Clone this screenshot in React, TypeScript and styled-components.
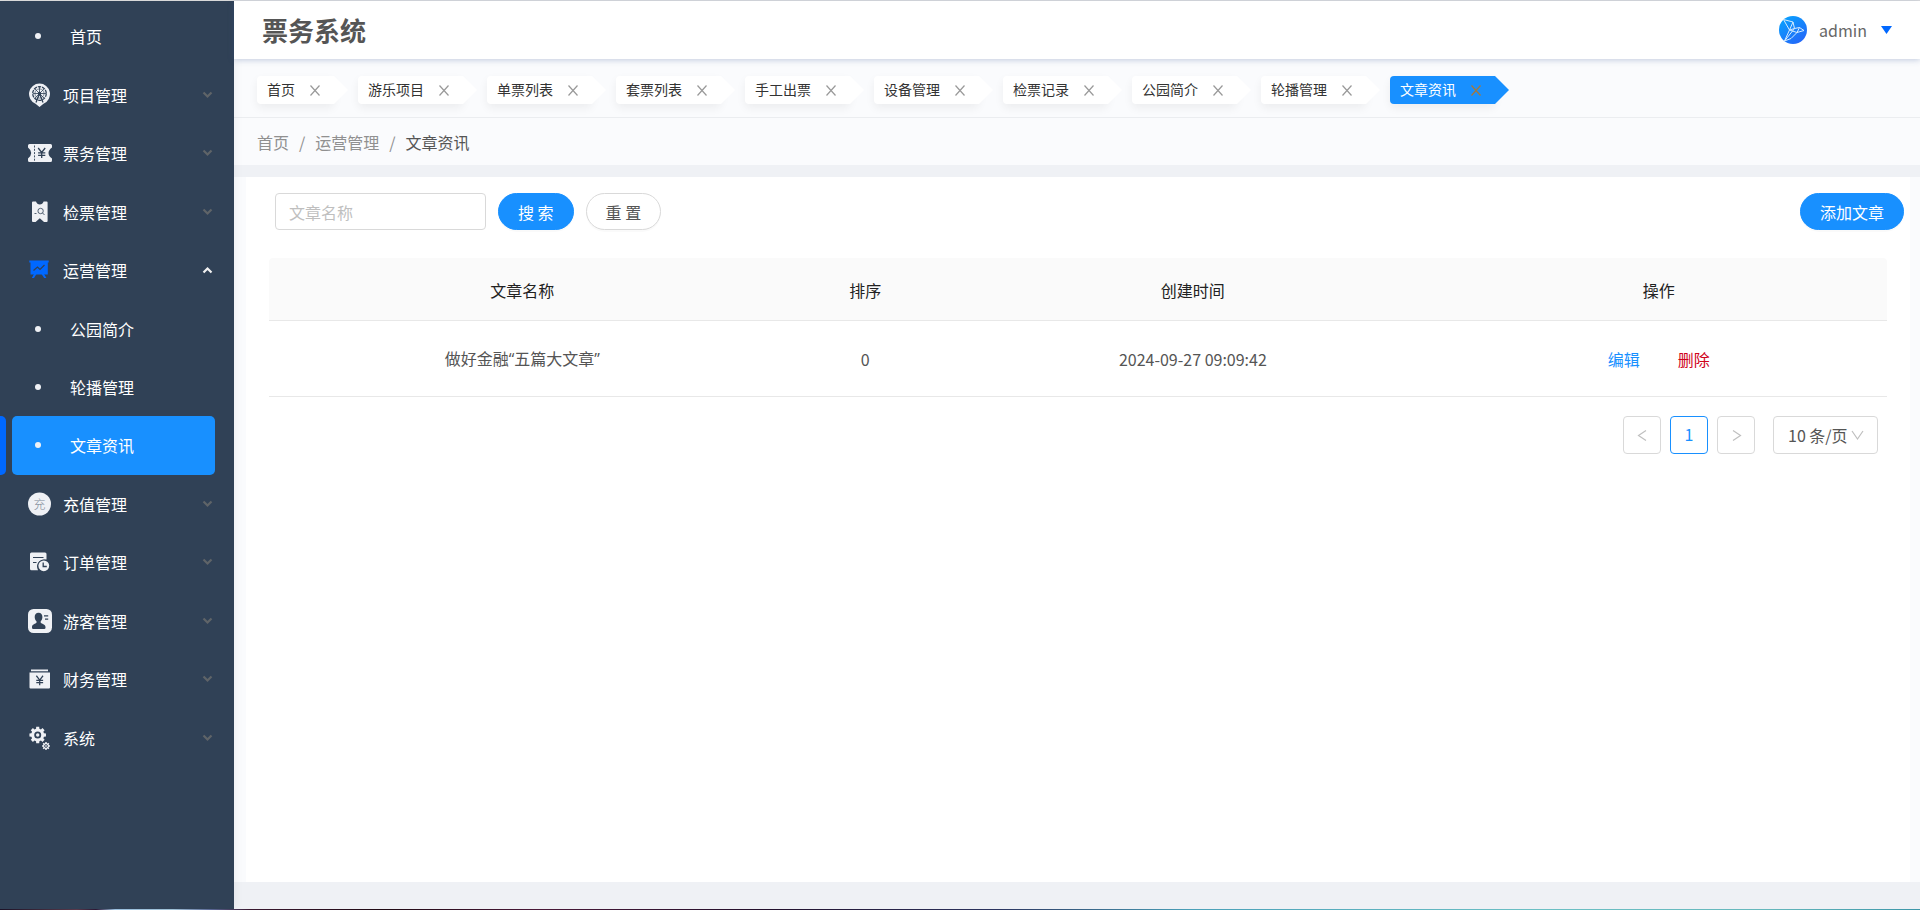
import React from 'react';
import styled, { createGlobalStyle, css } from 'styled-components';

const color = {
  navy: '#304156',
  primary: '#1890ff',
  strong: '#0068ff',
  page: '#eff1f5',
  soft: '#fafbfd',
  icon: '#eff1f5',
  line: '#d9d9d9',
  rule: '#e8e8e8',
};

const GlobalStyle = createGlobalStyle`
  *, *::before, *::after { box-sizing: border-box; }
  body {
    margin: 0;
    color: #555;
    font: 400 16px/24px "Noto Sans CJK SC", sans-serif;
  }
  button, input, select { font: inherit; color: inherit; margin: 0; }
  button { cursor: pointer; }
  ul, ol { list-style: none; margin: 0; padding: 0; }
  a { text-decoration: none; }
  svg { display: block; }
`;

/* ---------- frame ---------- */

const Page = styled.div`
  display: grid;
  grid-template-columns: 234px minmax(0, 1fr);
  grid-template-rows: 1fr 1px;
  min-height: 100vh;
  border-top: 1px solid #dedede;
  background: ${color.page};
`;

const Desktop = styled.div`
  grid-column: 1 / -1;
  background: linear-gradient(
    90deg,
    #1d1328 0%, #5a3a4c 4%, #2c1836 5%, #9fc4e4 6%, #a4c6dc 9%, #5c6a98 11%,
    #3a1830 13%, #200a14 20%, #4a1838 28%, #23102c 40%, #2c3560 52%,
    #4aa0b8 62%, #6cc0c4 80%, #66b8bc 92%, #3c96a8 100%
  );
`;

/* ---------- sidebar ---------- */

const Sidebar = styled.aside`
  position: relative;
  padding-top: 6px;
  background: ${color.navy};
  box-shadow: 2px 0 8px rgba(0, 21, 41, 0.05);
`;

const Menu = styled.ul`
  display: grid;
  grid-auto-rows: 1fr;
  height: 760px;
`;

const MenuRow = styled.li<{ $active?: boolean }>`
  display: flex;
  padding: 0 19px 0 12px;
  ${(p) =>
    p.$active &&
    css`
      padding-left: 0;
      gap: 6px;
      &::before {
        content: '';
        width: 6px;
        background: ${color.strong};
        border-radius: 0 5px 5px 0;
      }
    `}
`;

const MenuItem = styled.button<{ $active?: boolean }>`
  flex: 1;
  display: flex;
  align-items: center;
  gap: 11px;
  padding: 0 2px 0 16px;
  border: 0;
  border-radius: 5px;
  background: ${(p) => (p.$active ? color.primary : 'transparent')};
  color: #fff;
  text-align: left;
`;

const MenuLabel = styled.span`
  flex: 1;
`;

const SubLabel = styled(MenuLabel)`
  padding-left: 7px;
`;

const Bullet = styled.span`
  width: 24px;
  display: flex;
  padding-left: 7px;
  &::before {
    content: '';
    width: 6px;
    height: 6px;
    border-radius: 50%;
    background: ${color.icon};
  }
`;

/* ---------- header ---------- */

const Main = styled.div`
  display: flex;
  flex-direction: column;
  min-width: 0;
`;

const Header = styled.header`
  position: relative;
  display: flex;
  align-items: center;
  justify-content: space-between;
  height: 58px;
  padding: 0 28px;
  background: #fff;
  box-shadow: 0 1px 6px rgba(60, 90, 150, 0.3);
`;

const Title = styled.h1`
  margin: 0;
  color: #555;
  font-size: 26px;
  line-height: 36px;
  font-weight: 700;
`;

const Account = styled.button`
  display: flex;
  align-items: center;
  gap: 12px;
  padding: 0;
  border: 0;
  background: none;
  color: #666;
`;

const Caret = styled.svg`
  margin-left: 2px;
`;

/* ---------- open tabs ---------- */

const TabBar = styled.nav`
  display: flex;
  flex-wrap: wrap;
  gap: 10px;
  padding: 17px 23px 13px;
  background: ${color.soft};
  border-bottom: 1px solid #ebedf0;
`;

const Tab = styled.div<{ $active?: boolean }>`
  position: relative;
  display: flex;
  align-items: center;
  gap: 14px;
  height: 28px;
  margin-right: 14px;
  padding: 0 12px 0 10px;
  border-radius: 4px;
  background: ${(p) => (p.$active ? color.primary : '#fff')};
  box-shadow: 0 4px 10px rgba(0, 0, 0, 0.06);
  &::after {
    content: '';
    position: absolute;
    top: 0;
    left: calc(100% - 4px);
    width: 18px;
    height: 28px;
    background: inherit;
    clip-path: polygon(0 0, 4px 0, 100% 50%, 4px 100%, 0 100%);
  }
`;

const TabLink = styled.a<{ $active?: boolean }>`
  padding-bottom: 2px;
  color: ${(p) => (p.$active ? '#fff' : '#333')};
  font-size: 14px;
  line-height: 20px;
`;

const TabClose = styled.button<{ $active?: boolean }>`
  position: relative;
  z-index: 1;
  width: 13px;
  padding: 0;
  border: 0;
  background: none;
  color: ${(p) => (p.$active ? '#a87838' : '#999')};
`;

const Crumbs = styled.ol`
  display: flex;
  align-items: center;
  height: 47px;
  padding: 0 23px;
  background: ${color.soft};
  color: #555;
  a { color: #909090; }
  li + li::before {
    content: '/';
    margin: 0 10px;
    color: #909090;
  }
`;

/* ---------- content ---------- */

const Content = styled.main`
  flex: 1;
  display: flex;
  margin: 12px 0 27px;
  padding: 0 10px 0 12px;
  background: ${color.soft};
`;

const Panel = styled.section`
  flex: 1;
  min-width: 0;
  background: #fff;
  padding: 16px 23px;
`;

const Toolbar = styled.form`
  display: flex;
  align-items: center;
  gap: 12px;
  margin: 0 -17px 28px 6px;
`;

const SearchInput = styled.input`
  width: 211px;
  height: 37px;
  padding: 1px 13px 0;
  border: 1px solid ${color.line};
  border-radius: 4px;
  background: #fff;
  &::placeholder { color: #bfbfbf; opacity: 1; }
`;

const PillButton = styled.button<{ $primary?: boolean }>`
  height: 37px;
  padding: 0 19px;
  border: 1px solid ${(p) => (p.$primary ? color.primary : color.line)};
  border-radius: 19px;
  background: ${(p) => (p.$primary ? color.primary : '#fff')};
  color: ${(p) => (p.$primary ? '#fff' : '#555')};
  box-shadow: 0 2px 0 rgba(0, 0, 0, 0.02);
`;

const Spacer = styled.span`
  flex: 1;
`;

const Table = styled.table`
  width: 100%;
  table-layout: fixed;
  border-collapse: separate;
  border-spacing: 0;
  text-align: center;
`;

const Col = styled.col<{ $share: number }>`
  width: ${(p) => p.$share}%;
`;

const HeadCell = styled.th`
  height: 63px;
  padding: 1px 16px 0;
  background: #fafafa;
  border-bottom: 1px solid ${color.rule};
  color: #222;
  font-weight: 400;
  &:first-child { border-top-left-radius: 4px; }
  &:last-child { border-top-right-radius: 4px; }
`;

const Cell = styled.td`
  height: 76px;
  padding: 1px 16px 0;
  border-bottom: 1px solid ${color.rule};
`;

const NameCell = styled(Cell)`
  font-family: "Open Sans", "Noto Sans CJK SC", sans-serif;
`;

const Actions = styled.div`
  display: flex;
  justify-content: center;
  gap: 38px;
`;

const Action = styled.a<{ $danger?: boolean }>`
  color: ${(p) => (p.$danger ? '#d0021b' : color.primary)};
`;

const Pager = styled.nav`
  display: flex;
  justify-content: flex-end;
  gap: 9px;
  padding: 19px 9px 0 0;
`;

const PageButton = styled.button<{ $current?: boolean }>`
  display: flex;
  align-items: center;
  justify-content: center;
  width: 38px;
  height: 38px;
  padding: 0 0 2px;
  border: 1px solid ${(p) => (p.$current ? color.primary : color.line)};
  border-radius: 4px;
  background: #fff;
  color: ${(p) => (p.$current ? color.primary : '#bfbfbf')};
`;

const SizePicker = styled.label`
  position: relative;
  margin-left: 9px;
  svg {
    position: absolute;
    right: 14px;
    top: 12px;
    color: #bfbfbf;
    pointer-events: none;
  }
`;

const SizeSelect = styled.select`
  appearance: none;
  width: 105px;
  height: 38px;
  padding: 0 14px;
  border: 1px solid ${color.line};
  border-radius: 4px;
  background: #fff;
`;

/* ---------- icons ---------- */

const Icon = ({ children }: { children: React.ReactNode }) => (
  <svg width="24" height="24" viewBox="0 0 24 24" fill={color.icon} aria-hidden="true">
    {children}
  </svg>
);

const Yen = ({ x, y, s }: { x: number; y: number; s: number }) => (
  <g
    transform={`translate(${x} ${y}) scale(${s})`}
    fill="none"
    stroke={color.navy}
    strokeWidth="1.3"
  >
    <path d="M-3.5 -5L0 -.5L3.5 -5M0 -.5V5M-3.6 -.2H3.6M-3.6 2.3H3.6" />
  </g>
);

const WheelIcon = () => (
  <Icon>
    <path d="M11.5.5a10.5 10.5 0 0 1 4 20.2L11.5 24l-4-3.3A10.5 10.5 0 0 1 11.5.5z" />
    <g fill="none" stroke={color.navy} strokeWidth="1">
      <circle cx="11.5" cy="10.5" r="6.8" strokeWidth="1.3" strokeDasharray="3.4 .9" />
      <circle cx="11.5" cy="10.5" r="4.6" strokeWidth=".6" />
      <circle cx="11.5" cy="10.5" r="1.4" fill={color.navy} />
      <path d="M11.5 4v6.500M5 10.500h13M7 6l9 9M16 6l-9 9" strokeWidth=".8" />
      <path d="M11.500 10.500L8 19.500M11.500 10.500L15 19.500" strokeWidth="1.300" />
    </g>
  </Icon>
);

const TicketIcon = () => (
  <Icon>
    <path d="M1.500 3H22.500Q24 3 24 4.500V6.500Q20.500 9 20.500 12T24 17.500V19.500Q24 21 22.500 21H1.500Q0 21 0 19.500V17.500Q3.200 15 3.200 12T0 6.500V4.500Q0 3 1.500 3z" />
    <path d="M6.500 4.500V20" stroke={color.navy} strokeWidth=".9" strokeDasharray="2 1.300" />
    <Yen x={13.700} y={12} s={1} />
  </Icon>
);

const CheckIcon = () => (
  <Icon>
    <path d="M5 1.500H8Q9 4.500 11.800 4.500T15.600 1.500H18.600Q19.600 1.500 19.600 2.500V21Q19.600 22 18.600 22H16L11.800 18.200L7.600 22H5Q4 22 4 21V2.500Q4 1.500 5 1.500z" />
    <g fill="none" stroke={color.navy} strokeWidth=".8">
      <circle cx="12.600" cy="11" r="2.700" />
      <path d="M14.500 12.900L16.500 15M6.500 13.500H8.500" />
    </g>
  </Icon>
);

const BoardIcon = () => (
  <Icon>
    <g fill={color.strong}>
      <path d="M1.300 2.500H20.700V4.500H19.800V16.500H2.500V4.500H1.300z" />
      <path d="M6 16H8.500L6 20H3.800zM13.500 16H16L18.400 20H16.200z" />
    </g>
    <path
      d="M5.500 12.500L9.500 9L12 11.500L16.500 7"
      fill="none"
      stroke={color.navy}
      strokeWidth="1.200"
    />
  </Icon>
);

const GlyphText = styled.text`
  font-size: 12px;
  font-weight: 300;
  fill: #7d8997;
`;

const RechargeIcon = () => (
  <Icon>
    <circle cx="11.500" cy="12" r="11.500" />
    <GlyphText x="11.500" y="16.500" textAnchor="middle">
      充
    </GlyphText>
  </Icon>
);

const OrderIcon = () => (
  <Icon>
    <path d="M3.500 2.500H17Q18.500 2.500 18.500 4V9.500Q10 8.500 9 16Q9 18.500 10 20.300H3.500Q2 20.300 2 18.800V4Q2 2.500 3.500 2.500z" />
    <path d="M5 7.500H15.500M5 12.500H8.500" stroke={color.navy} strokeWidth="1.200" />
    <circle cx="15.800" cy="15.800" r="6.200" fill={color.navy} />
    <circle cx="15.800" cy="15.800" r="5.400" />
    <path d="M15.200 12.500V16.500H18.800" fill="none" stroke={color.navy} strokeWidth="1.300" />
  </Icon>
);

const VisitorIcon = () => (
  <Icon>
    <rect width="24" height="24" rx="5.500" />
    <g fill={color.navy}>
      <path d="M10.500 3.800c2.600 0 3.900 1.800 3.900 4.200 0 1.900-.7 3.300-1.700 4.200v1.500c.8 1 4.800 1.300 4.800 4.300v.7q0 1.300-1.300 1.300H5.300Q4 20 4 18.700V18c0-3 3.700-3.300 4.500-4.300v-1.500C7.400 11.300 6.700 9.900 6.700 8c0-2.400 1.300-4.200 3.800-4.200z" />
      <path d="M16 6.200h4.200v1.200H16zM17 9.500h3.200v1.200H17z" />
    </g>
  </Icon>
);

const FinanceIcon = () => (
  <Icon>
    <path d="M3 2.500H20V4.300H3zM1.500 5.600H22V20.500Q22 21.600 20.900 21.600H2.600Q1.500 21.600 1.500 20.500z" />
    <Yen x={11.700} y={13.500} s={0.950} />
  </Icon>
);

const gearPath = (cx: number, cy: number, outer: number, inner: number) => {
  const points: string[] = [];
  for (let i = 0; i < 8; i += 1) {
    const base = (i * Math.PI) / 4;
    [
      [-0.26, inner],
      [-0.18, outer],
      [0.18, outer],
      [0.26, inner],
    ].forEach(([turn, radius]) => {
      const x = cx + radius * Math.cos(base + turn);
      const y = cy + radius * Math.sin(base + turn);
      points.push(`${x.toFixed(2)} ${y.toFixed(2)}`);
    });
  }
  return `M${points.join('L')}z`;
};

const GearsIcon = () => (
  <Icon>
    <path d={gearPath(9.700, 9, 8.400, 6.500)} />
    <circle cx="9.700" cy="9" r="2.600" fill="none" stroke={color.navy} strokeWidth="1.800" />
    <path d={gearPath(18, 20, 4, 3)} />
    <circle cx="18" cy="20" r="1.400" fill="none" stroke={color.navy} strokeWidth=".9" />
  </Icon>
);

const MenuChevron = ({ open }: { open?: boolean }) => (
  <svg width="12" height="12" viewBox="0 0 12 12" fill="none" aria-hidden="true">
    <path
      d={open ? 'M2.500 8.500L6.500 4.500L10.500 8.500' : 'M2.500 3.500L6.500 7.500L10.500 3.500'}
      stroke={open ? '#f2f2f2' : '#5f6468'}
      strokeWidth="2.200"
    />
  </svg>
);

const ThinIcon = ({ d }: { d: string }) => (
  <svg width="13" height="13" viewBox="0 0 13 13" fill="none" stroke="currentColor" aria-hidden="true">
    <path d={d} strokeWidth="1.200" />
  </svg>
);

const Avatar = () => (
  <svg width="28" height="28" viewBox="0 0 28 28" aria-hidden="true">
    <defs>
      <linearGradient id="avatar" x1="0" y1="0" x2=".7" y2="1">
        <stop offset="0" stopColor="#06a7ff" />
        <stop offset="1" stopColor="#2468f8" />
      </linearGradient>
    </defs>
    <circle cx="14" cy="14" r="14" fill="url(#avatar)" />
    <g fill="none" stroke="#d5ecff" strokeWidth="1" strokeLinejoin="round">
      <path d="M4.500 3.500L14 6L15.500 12.500L10.500 14z" />
      <path d="M14 6L10.500 14L5.500 25L12 22.500L18 16.500L10.500 14" />
      <path d="M15.500 12.500L20.500 11.500L25 14.500L18 16.500M20.500 11.500L18 16.500M5.500 25L15.500 12.500" />
    </g>
  </svg>
);

/* ---------- data ---------- */

type MenuEntry = {
  label: string;
  icon?: () => React.ReactElement;
  open?: boolean;
  active?: boolean;
};

const menu: MenuEntry[] = [
  { label: '首页' },
  { label: '项目管理', icon: WheelIcon },
  { label: '票务管理', icon: TicketIcon },
  { label: '检票管理', icon: CheckIcon },
  { label: '运营管理', icon: BoardIcon, open: true },
  { label: '公园简介' },
  { label: '轮播管理' },
  { label: '文章资讯', active: true },
  { label: '充值管理', icon: RechargeIcon },
  { label: '订单管理', icon: OrderIcon },
  { label: '游客管理', icon: VisitorIcon },
  { label: '财务管理', icon: FinanceIcon },
  { label: '系统', icon: GearsIcon },
];

const tabs = [
  '首页',
  '游乐项目',
  '单票列表',
  '套票列表',
  '手工出票',
  '设备管理',
  '检票记录',
  '公园简介',
  '轮播管理',
  '文章资讯',
];
const currentTab = '文章资讯';

const columns = [
  { title: '文章名称', share: 31.3 },
  { title: '排序', share: 11.1 },
  { title: '创建时间', share: 29.4 },
  { title: '操作', share: 28.2 },
];

const articles = [{ name: '做好金融“五篇大文章”', order: 0, created: '2024-09-27 09:09:42' }];

export default function App() {
  return (
    <>
      <GlobalStyle />
      <Page>
        <Sidebar>
          <Menu>
            {menu.map(({ label, icon: ItemIcon, open, active }) => (
              <MenuRow key={label} $active={active}>
                <MenuItem type="button" $active={active} aria-expanded={ItemIcon ? !!open : undefined}>
                  {ItemIcon ? <ItemIcon /> : <Bullet />}
                  {ItemIcon ? <MenuLabel>{label}</MenuLabel> : <SubLabel>{label}</SubLabel>}
                  {ItemIcon && <MenuChevron open={open} />}
                </MenuItem>
              </MenuRow>
            ))}
          </Menu>
        </Sidebar>

        <Main>
          <Header>
            <Title>票务系统</Title>
            <Account type="button">
              <Avatar />
              admin
              <Caret width="11" height="8" viewBox="0 0 11 8" fill={color.strong} aria-hidden="true">
                <path d="M0 0H11L5.500 8z" />
              </Caret>
            </Account>
          </Header>

          <TabBar>
            {tabs.map((name) => (
              <Tab key={name} $active={name === currentTab}>
                <TabLink href="#" $active={name === currentTab}>
                  {name}
                </TabLink>
                <TabClose type="button" aria-label={`关闭${name}`} $active={name === currentTab}>
                  <ThinIcon d="M1.500 1.500L10.500 11.500M10.500 1.500L1.500 11.500" />
                </TabClose>
              </Tab>
            ))}
          </TabBar>

          <Crumbs>
            <li><a href="#">首页</a></li>
            <li><a href="#">运营管理</a></li>
            <li>文章资讯</li>
          </Crumbs>

          <Content>
            <Panel>
              <Toolbar onSubmit={(e) => e.preventDefault()}>
                <SearchInput type="text" placeholder="文章名称" aria-label="文章名称" />
                <PillButton type="submit" $primary>搜 索</PillButton>
                <PillButton type="reset">重 置</PillButton>
                <Spacer />
                <PillButton type="button" $primary>添加文章</PillButton>
              </Toolbar>

              <Table>
                <colgroup>
                  {columns.map((c) => <Col key={c.title} $share={c.share} />)}
                </colgroup>
                <thead>
                  <tr>
                    {columns.map((c) => <HeadCell key={c.title} scope="col">{c.title}</HeadCell>)}
                  </tr>
                </thead>
                <tbody>
                  {articles.map((a) => (
                    <tr key={a.name}>
                      <NameCell>{a.name}</NameCell>
                      <Cell>{a.order}</Cell>
                      <Cell>{a.created}</Cell>
                      <Cell>
                        <Actions>
                          <Action href="#">编辑</Action>
                          <Action href="#" $danger>删除</Action>
                        </Actions>
                      </Cell>
                    </tr>
                  ))}
                </tbody>
              </Table>

              <Pager aria-label="分页">
                <PageButton type="button" aria-label="上一页" disabled>
                  <ThinIcon d="M10 2.500L2.500 7.500L10 12.500" />
                </PageButton>
                <PageButton type="button" $current>1</PageButton>
                <PageButton type="button" aria-label="下一页" disabled>
                  <ThinIcon d="M3 2.500L10.500 7.500L3 12.500" />
                </PageButton>
                <SizePicker>
                  <SizeSelect aria-label="每页条数" defaultValue="10">
                    <option value="10">10 条/页</option>
                    <option value="20">20 条/页</option>
                    <option value="50">50 条/页</option>
                  </SizeSelect>
                  <ThinIcon d="M1 3L6.500 11L12 3" />
                </SizePicker>
              </Pager>
            </Panel>
          </Content>
        </Main>
        <Desktop />
      </Page>
    </>
  );
}
